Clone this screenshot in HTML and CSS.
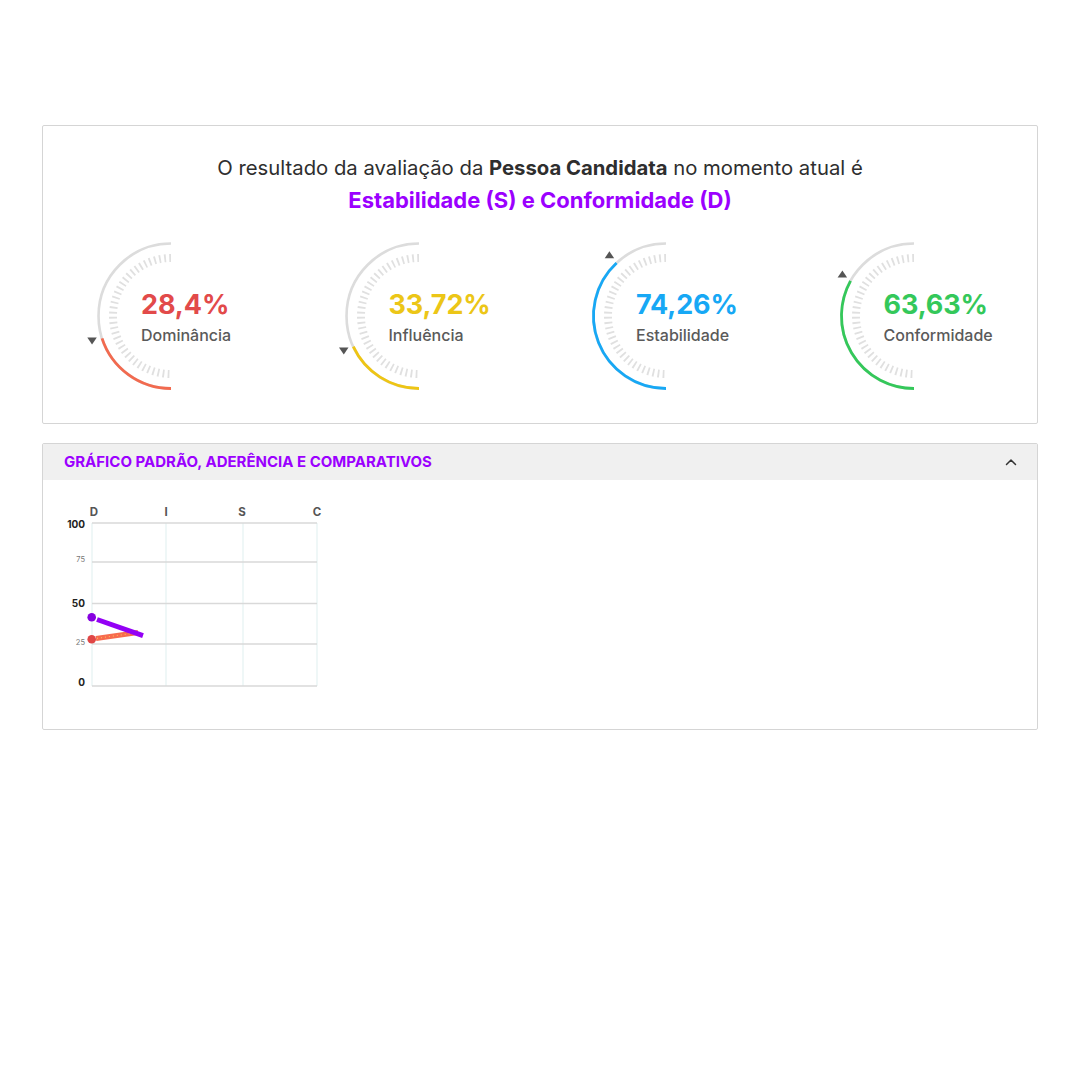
FILE: index.html
```html
<!DOCTYPE html>
<html lang="pt-BR">
<head>
<meta charset="utf-8">
<title>Resultado DISC</title>
<link rel="stylesheet" href="styles.css">
</head>
<body>
<main class="page">
  <section class="card result">
    <h1 class="result-title">O resultado da avaliação da <strong>Pessoa Candidata</strong> no momento atual é</h1>
    <p class="result-profile">Estabilidade (S) e Conformidade (D)</p>
    <div class="gauges">
      <div class="gauge">
        <svg class="gauge-svg" width="90" height="160" viewBox="0 0 90 160">
          <path class="g-track" d="M88 7.5 A72.5 72.5 0 0 0 88 152.5"/>
          <path class="g-ticks" d="M88 22 A58 58 0 0 0 88 138"/>
          <path class="g-value red" d="M88 152.5 A72.5 72.5 0 0 1 19.05 102.4"/>
          <polygon class="g-mark" points="4.3,101.6 13.8,101.6 9.05,108.6"/>
        </svg>
        <div class="gauge-text">
          <div class="gauge-value t-red">28,4%</div>
          <div class="gauge-label">Dominância</div>
        </div>
      </div>
      <div class="gauge">
        <svg class="gauge-svg" width="90" height="160" viewBox="0 0 90 160">
          <path class="g-track" d="M88 7.5 A72.5 72.5 0 0 0 88 152.5"/>
          <path class="g-ticks" d="M88 22 A58 58 0 0 0 88 138"/>
          <path class="g-value yellow" d="M88 152.5 A72.5 72.5 0 0 1 22.3 110.7"/>
          <polygon class="g-mark" points="8,111.6 17.5,111.6 12.8,118.6"/>
        </svg>
        <div class="gauge-text">
          <div class="gauge-value t-yellow">33,72%</div>
          <div class="gauge-label">Influência</div>
        </div>
      </div>
      <div class="gauge">
        <svg class="gauge-svg" width="90" height="160" viewBox="0 0 90 160">
          <path class="g-track" d="M88 7.5 A72.5 72.5 0 0 0 88 152.5"/>
          <path class="g-ticks" d="M88 22 A58 58 0 0 0 88 138"/>
          <path class="g-value blue" d="M88 152.5 A72.5 72.5 0 0 1 38.55 26.97"/>
          <polygon class="g-mark" points="26.7,22.3 36.2,22.3 31.4,15.3"/>
        </svg>
        <div class="gauge-text">
          <div class="gauge-value t-blue">74,26%</div>
          <div class="gauge-label">Estabilidade</div>
        </div>
      </div>
      <div class="gauge">
        <svg class="gauge-svg" width="90" height="160" viewBox="0 0 90 160">
          <path class="g-track" d="M88 7.5 A72.5 72.5 0 0 0 88 152.5"/>
          <path class="g-ticks" d="M88 22 A58 58 0 0 0 88 138"/>
          <path class="g-value green" d="M88 152.5 A72.5 72.5 0 0 1 24.57 44.84"/>
          <polygon class="g-mark" points="11.6,41.5 21.1,41.5 16.4,34.5"/>
        </svg>
        <div class="gauge-text">
          <div class="gauge-value t-green">63,63%</div>
          <div class="gauge-label">Conformidade</div>
        </div>
      </div>
    </div>
  </section>

  <section class="card chart-card">
    <header class="chart-head">
      <h2 class="chart-title">Gráfico padrão, aderência e comparativos</h2>
      <svg class="chevron" width="12" height="8" viewBox="0 0 12 8"><path d="M1.5 6.5 L6 2 L10.5 6.5"/></svg>
    </header>
    <div class="chart-body">
      <svg class="chart" width="270" height="200" viewBox="0 0 270 200">
        <g class="col-labels">
          <text x="34" y="15.5">D</text>
          <text x="106" y="15.5">I</text>
          <text x="182" y="15.5">S</text>
          <text x="257" y="15.5">C</text>
        </g>
        <g class="vlines">
          <line x1="32" y1="23" x2="32" y2="186"/>
          <line x1="106" y1="23" x2="106" y2="186"/>
          <line x1="183" y1="23" x2="183" y2="186"/>
          <line x1="257" y1="23" x2="257" y2="186"/>
        </g>
        <g class="hlines">
          <line x1="32" y1="23" x2="257" y2="23"/>
          <line x1="32" y1="62" x2="257" y2="62"/>
          <line x1="32" y1="103.5" x2="257" y2="103.5"/>
          <line x1="32" y1="144" x2="257" y2="144"/>
          <line x1="32" y1="186" x2="257" y2="186"/>
        </g>
        <g class="y-labels">
          <text class="major" x="25" y="28">100</text>
          <text class="minor" x="25" y="61.5">75</text>
          <text class="major" x="25" y="106.5">50</text>
          <text class="minor" x="25" y="145">25</text>
          <text class="major" x="25" y="185.5">0</text>
        </g>
        <line class="l-orange" x1="36" y1="138.5" x2="78" y2="132.5"/>
        <line class="l-orange-dots" x1="37" y1="138.3" x2="77" y2="132.7"/>
        <circle class="d-red" cx="31.7" cy="139.3" r="4.3"/>
        <line class="l-purple" x1="37" y1="119.5" x2="83" y2="135.7"/>
        <circle class="d-purple" cx="31.7" cy="117.3" r="4.3"/>
      </svg>
    </div>
  </section>
</main>
</body>
</html>
```

FILE: styles.css
```css
* { box-sizing: border-box; }

html, body {
  margin: 0;
  padding: 0;
  background: #ffffff;
}

body {
  font-family: "Inter", "Noto Sans", "Liberation Sans", sans-serif;
  color: #333333;
}

.page {
  width: 996px;
  margin-left: 42px;
  padding-top: 125px;
}

.card {
  border: 1px solid #d5d5d5;
  border-radius: 2px;
  background: #ffffff;
}

/* ---------- result card ---------- */
.result {
  height: 299px;
  padding-top: 26px;
}

.result-title {
  margin: 0;
  font-size: 20.3px;
  line-height: 32px;
  font-weight: 400;
  text-align: center;
  color: #2e2e2e;
}

.result-title strong {
  font-weight: 700;
}

.result-profile {
  margin: 0;
  font-size: 22px;
  line-height: 32px;
  font-weight: 700;
  text-align: center;
  color: #9b00ff;
}

.gauges {
  display: grid;
  grid-template-columns: repeat(4, 247.5px);
  margin-top: 19.5px;
}

.gauge {
  position: relative;
  height: 160px;
  margin-left: 40px;
}

.gauge-svg {
  display: block;
}

.g-track {
  fill: none;
  stroke: #dcdcdc;
  stroke-width: 2.6;
}

.g-ticks {
  fill: none;
  stroke: #e0e0e0;
  stroke-width: 8;
  stroke-dasharray: 1.8 3.3;
}

.g-value {
  fill: none;
  stroke-width: 2.8;
}

.g-value.red { stroke: #f26a4f; }
.g-value.yellow { stroke: #eec514; }
.g-value.blue { stroke: #17a8f5; }
.g-value.green { stroke: #34c85a; }

.g-mark { fill: #555555; }

.gauge-text {
  position: absolute;
  left: 58px;
  top: 52.5px;
  white-space: nowrap;
}

.gauge-value {
  font-size: 27px;
  line-height: 34px;
  font-weight: 700;
  letter-spacing: -0.1px;
}

.t-red { color: #e24a4a; }
.t-yellow { color: #ecc617; }
.t-blue { color: #17a8f5; }
.t-green { color: #34c85a; }

.gauge-label {
  font-size: 16px;
  line-height: 26px;
  font-weight: 500;
  color: #5a5a5a;
}

/* ---------- chart card ---------- */
.chart-card {
  margin-top: 19px;
  height: 287px;
}

.chart-head {
  display: flex;
  align-items: center;
  justify-content: space-between;
  height: 36px;
  padding: 0 20px 0 21px;
  background: #f0f0f0;
}

.chart-title {
  margin: 0;
  font-size: 15px;
  line-height: 20px;
  font-weight: 700;
  text-transform: uppercase;
  color: #9b00ff;
}

.chevron path {
  fill: none;
  stroke: #333333;
  stroke-width: 1.5;
  stroke-linecap: round;
  stroke-linejoin: round;
}

.chart-body {
  padding: 20px 0 0 17px;
}

.chart {
  display: block;
  font-family: "Inter", "Noto Sans", "Liberation Sans", sans-serif;
}

.col-labels text {
  font-size: 11.5px;
  font-weight: 700;
  fill: #555555;
  text-anchor: middle;
}

.y-labels text {
  text-anchor: end;
}

.y-labels .major {
  font-size: 10px;
  font-weight: 700;
  fill: #222222;
}

.y-labels .minor {
  font-size: 7.5px;
  fill: #777777;
}

.vlines line {
  stroke: #eaf4f4;
  stroke-width: 1.5;
}

.hlines line {
  stroke: #d9d9d9;
  stroke-width: 1.3;
}

.l-orange {
  stroke: #f76b4e;
  stroke-width: 5;
}

.l-orange-dots {
  stroke: #ffcf5a;
  stroke-width: 1.2;
  stroke-dasharray: 1 3;
  opacity: 0.8;
}

.l-purple {
  stroke: #9300f5;
  stroke-width: 5;
}

.d-red { fill: #e04646; }
.d-purple { fill: #8600e0; }
```
